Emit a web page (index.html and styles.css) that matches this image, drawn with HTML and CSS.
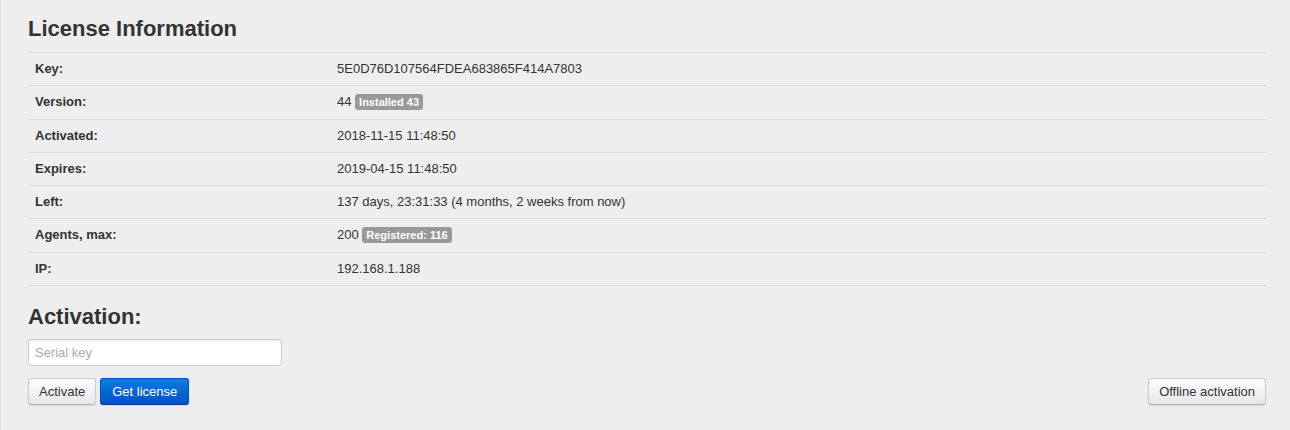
FILE: index.html
```html
<!DOCTYPE html>
<html lang="en">

<head>
    <meta charset="UTF-8" />
    <meta name="viewport" content="width=device-width, initial-scale=1" />
    <title>License</title>
    <link rel="stylesheet" href="styles.css">
</head>

<body>
    <div class="page">
        <h2>License Information</h2>

        <table class="info">
            <tr>
                <th>Key:</th>
                <td>5E0D76D107564FDEA683865F414A7803</td>
            </tr>
            <tr>
                <th>Version:</th>
                <td>44 <span class="badge">Installed 43</span></td>
            </tr>
            <tr>
                <th>Activated:</th>
                <td>2018-11-15 11:48:50</td>
            </tr>
            <tr>
                <th>Expires:</th>
                <td>2019-04-15 11:48:50</td>
            </tr>
            <tr>
                <th>Left:</th>
                <td>137 days, 23:31:33 (4 months, 2 weeks from now)</td>
            </tr>
            <tr>
                <th>Agents, max:</th>
                <td>200 <span class="badge">Registered: 116</span></td>
            </tr>
            <tr>
                <th>IP:</th>
                <td>192.168.1.188</td>
            </tr>
        </table>

        <h2 class="activation-title">Activation:</h2>

        <input type="text" class="serial" placeholder="Serial key" />

        <div class="actions">
            <button class="btn">Activate</button>
            <button class="btn btn-primary">Get license</button>
            <button class="btn btn-right">Offline activation</button>
        </div>
    </div>
</body>

</html>
```

FILE: styles.css
```css
body {
    font-family: 'Liberation Sans', Arial, sans-serif;
    font-size: 13px;
    background: #eeeeee;
    color: #333;
    margin: 0;
}

.page {
    border-left: 1px solid #e0e0e0;
    min-height: 430px;
    box-sizing: border-box;
    padding: 14px 24px 0 27px;
}

h2 {
    font-size: 22px;
    font-weight: 700;
    margin: 0 0 8px;
    line-height: 30px;
}

.info {
    width: 100%;
    border-collapse: collapse;
}

.info th,
.info td {
    border-top: 1px solid #dddddd;
    padding: 6px 7px;
    line-height: 20.3px;
    text-align: left;
    vertical-align: top;
}

.info th {
    width: 288px;
    font-weight: 700;
}

.info tr:last-child th,
.info tr:last-child td {
    border-bottom: 1px solid #dddddd;
}

.badge {
    display: inline-block;
    background: #999999;
    color: #fff;
    font-size: 11px;
    font-weight: 700;
    line-height: 16px;
    padding: 0 4px;
    border-radius: 3px;
    vertical-align: 0;
}

.activation-title {
    margin-top: 16px;
    margin-bottom: 7px;
}

.serial {
    display: block;
    width: 254px;
    height: 27px;
    box-sizing: border-box;
    border: 1px solid #cccccc;
    border-radius: 3px;
    padding: 4px 6px;
    font-family: inherit;
    font-size: 13px;
    background: #fff;
    box-shadow: inset 0 1px 1px rgb(0 0 0 / 0.075);
}

.serial::placeholder {
    color: #aaa;
}

.actions {
    display: flex;
    gap: 4px;
    margin-top: 12px;
}

.btn {
    height: 27px;
    padding: 0 10px;
    font-family: inherit;
    font-size: 13px;
    color: #333;
    background: linear-gradient(#ffffff, #e6e6e6);
    border: 1px solid #cccccc;
    border-bottom-color: #b3b3b3;
    border-radius: 3px;
    box-shadow: 0 1px 2px rgb(0 0 0 / 0.1);
    cursor: pointer;
}

.btn-primary {
    color: #fff;
    padding: 0 11px;
    background: linear-gradient(#0a7fdc, #0050c8);
    border-color: #0050c8 #0050c8 #003a99;
}

.btn-right {
    margin-left: auto;
}
```
